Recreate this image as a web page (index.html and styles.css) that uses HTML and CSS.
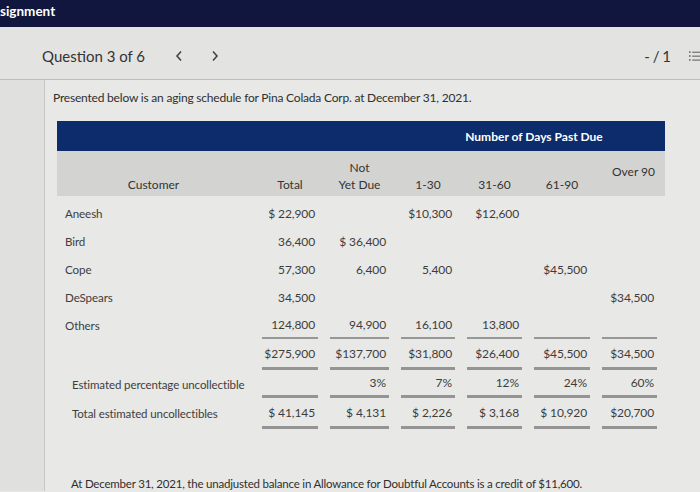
FILE: index.html
```html
<!DOCTYPE html>
<html>
<head>
<meta charset="utf-8">
<link rel="stylesheet" href="styles.css">
</head>
<body>
<div class="topbar"><span class="brand">signment</span></div>
<div class="qbar">
  <span class="qtitle">Question 3 of 6</span>
  <span class="nav">
    <svg width="8" height="12" viewBox="0 0 8 12"><path d="M6 1.5 L2 6 L6 10.5" fill="none" stroke="#444" stroke-width="1.6"/></svg>
  </span>
  <span class="nav">
    <svg width="8" height="12" viewBox="0 0 8 12"><path d="M2 1.5 L6 6 L2 10.5" fill="none" stroke="#444" stroke-width="1.6"/></svg>
  </span>
  <span class="spacer"></span>
  <span class="score">- / 1</span>
  <span class="listicon">
    <svg width="14" height="14" viewBox="0 0 14 14"><g fill="#666"><rect x="0" y="1" width="2" height="2"/><rect x="0" y="6" width="2" height="2"/><rect x="0" y="11" width="2" height="2"/><rect x="4" y="1.5" width="10" height="1.4"/><rect x="4" y="6.5" width="10" height="1.4"/><rect x="4" y="11.5" width="10" height="1.4"/></g></svg>
  </span>
</div>
<div class="body">
  <div class="sidebar"></div>
  <div class="main">
    <p class="intro">Presented below is an aging schedule for Pina Colada Corp. at December 31, 2021.</p>
    <div class="table">
      <div class="row bluebar"><span class="span-head">Number of Days Past Due</span></div>
      <div class="row headrow">
        <span class="h">Customer</span>
        <span class="h">Total</span>
        <span class="h">Not<br>Yet Due</span>
        <span class="h">1-30</span>
        <span class="h">31-60</span>
        <span class="h">61-90</span>
        <span class="h mid">Over 90</span>
      </div>
      <div class="row data">
        <span class="name">Aneesh</span><span class="v">$ 22,900</span><span class="v"></span><span class="v">$10,300</span><span class="v">$12,600</span><span class="v"></span><span class="v"></span>
      </div>
      <div class="row data">
        <span class="name">Bird</span><span class="v">36,400</span><span class="v">$ 36,400</span><span class="v"></span><span class="v"></span><span class="v"></span><span class="v"></span>
      </div>
      <div class="row data">
        <span class="name">Cope</span><span class="v">57,300</span><span class="v">6,400</span><span class="v">5,400</span><span class="v"></span><span class="v">$45,500</span><span class="v"></span>
      </div>
      <div class="row data">
        <span class="name">DeSpears</span><span class="v">34,500</span><span class="v"></span><span class="v"></span><span class="v"></span><span class="v"></span><span class="v">$34,500</span>
      </div>
      <div class="row data under1">
        <span class="name">Others</span><span class="v">124,800</span><span class="v">94,900</span><span class="v">16,100</span><span class="v">13,800</span><span class="v"></span><span class="v"></span>
      </div>
      <div class="row data totals under2">
        <span class="name"></span><span class="v">$275,900</span><span class="v">$137,700</span><span class="v">$31,800</span><span class="v">$26,400</span><span class="v">$45,500</span><span class="v">$34,500</span>
      </div>
      <div class="row data pct under2">
        <span class="name lbl">Estimated percentage uncollectible</span><span class="v"></span><span class="v">3%</span><span class="v">7%</span><span class="v">12%</span><span class="v">24%</span><span class="v">60%</span>
      </div>
      <div class="row data est under2">
        <span class="name lbl">Total estimated uncollectibles</span><span class="v">$ 41,145</span><span class="v">$ 4,131</span><span class="v">$ 2,226</span><span class="v">$ 3,168</span><span class="v">$ 10,920</span><span class="v">$20,700</span>
      </div>
    </div>
    <p class="note">At December 31, 2021, the unadjusted balance in Allowance for Doubtful Accounts is a credit of $11,600.</p>
  </div>
</div>
</body>
</html>
```
FILE: styles.css
```css
html, body {
  margin: 0;
  padding: 0;
  height: 100%;
  overflow: hidden;
}
body {
  background: #e8e8e7;
  font-family: Lato, "Open Sans", sans-serif;
  color: #3a3a3a;
}
.topbar {
  height: 27px;
  background: #10163d;
  display: flex;
  align-items: flex-start;
}
.brand {
  color: #ffffff;
  font-weight: 700;
  font-size: 13.5px;
  line-height: 18px;
  margin-top: 2px;
}
.qbar {
  height: 53px;
  background: #e3e3e2;
  border-bottom: 1px solid #bdbdbd;
  display: flex;
  align-items: center;
  padding-left: 42px;
  padding-top: 5px;
  box-sizing: border-box;
}
.qtitle {
  font-size: 15px;
  color: #333;
  margin-right: 30px;
}
.nav {
  display: flex;
  align-items: center;
  margin-right: 28px;
}
.spacer { flex: 1; }
.score {
  font-size: 15px;
  color: #333;
  margin-right: 18px;
  word-spacing: -1px;
}
.listicon {
  display: flex;
  width: 11px;
  overflow: hidden;
}
.body {
  display: flex;
  height: calc(100% - 81px);
}
.sidebar {
  width: 44px;
  background: #e0e0df;
  border-right: 1px solid #c6c6c6;
  flex: none;
}
.main {
  flex: 1;
  padding-left: 8px;
  padding-top: 10px;
}
.intro {
  margin: 0;
  font-size: 12px;
  letter-spacing: -0.2px;
  line-height: 16px;
  color: #2f2f2f;
}
.table {
  margin-top: 15px;
  margin-left: 4px;
  width: 608px;
}
.row {
  display: grid;
  grid-template-columns: 193px 56px 59px 54px 55px 56px 55px;
  column-gap: 12px;
  padding-right: 8px;
}
.bluebar {
  height: 30px;
  background: #0c2c6b;
  align-items: center;
}
.span-head {
  grid-column: 4 / 8;
  text-align: center;
  color: #fff;
  font-weight: 700;
  font-size: 12px;
  padding-left: 10px;
}
.headrow {
  height: 45px;
  background: #d3d3d2;
  margin-bottom: 3px;
}
.h {
  font-size: 12px;
  line-height: 17px;
  color: #333;
  text-align: center;
  align-self: end;
  padding-bottom: 3px;
}
.h.mid {
  align-self: center;
  padding-bottom: 4px;
  padding-left: 8px;
}
.data {
  height: 28px;
  font-size: 12px;
  letter-spacing: -0.1px;
  color: #3d3d3d;
}
.data > span {
  display: flex;
  align-items: center;
}
.name {
  padding-left: 8px;
  font-size: 11.6px;
  white-space: nowrap;
}
.name.lbl {
  padding-left: 15px;
  font-size: 11.5px;
}
.v {
  justify-content: flex-end;
  padding-right: 3px;
}
.under1 .v {
  border-bottom: 2px solid #979797;
}
.totals {
  height: 31px;
}
.pct {
  height: 28px;
}
.est {
  height: 31px;
}
.under2 .v {
  border-bottom: 3px solid #949494;
}
.note {
  margin: 47px 0 0 18px;
  font-size: 11.5px;
  letter-spacing: -0.2px;
  line-height: 16px;
  color: #2f2f2f;
  white-space: nowrap;
}
```
